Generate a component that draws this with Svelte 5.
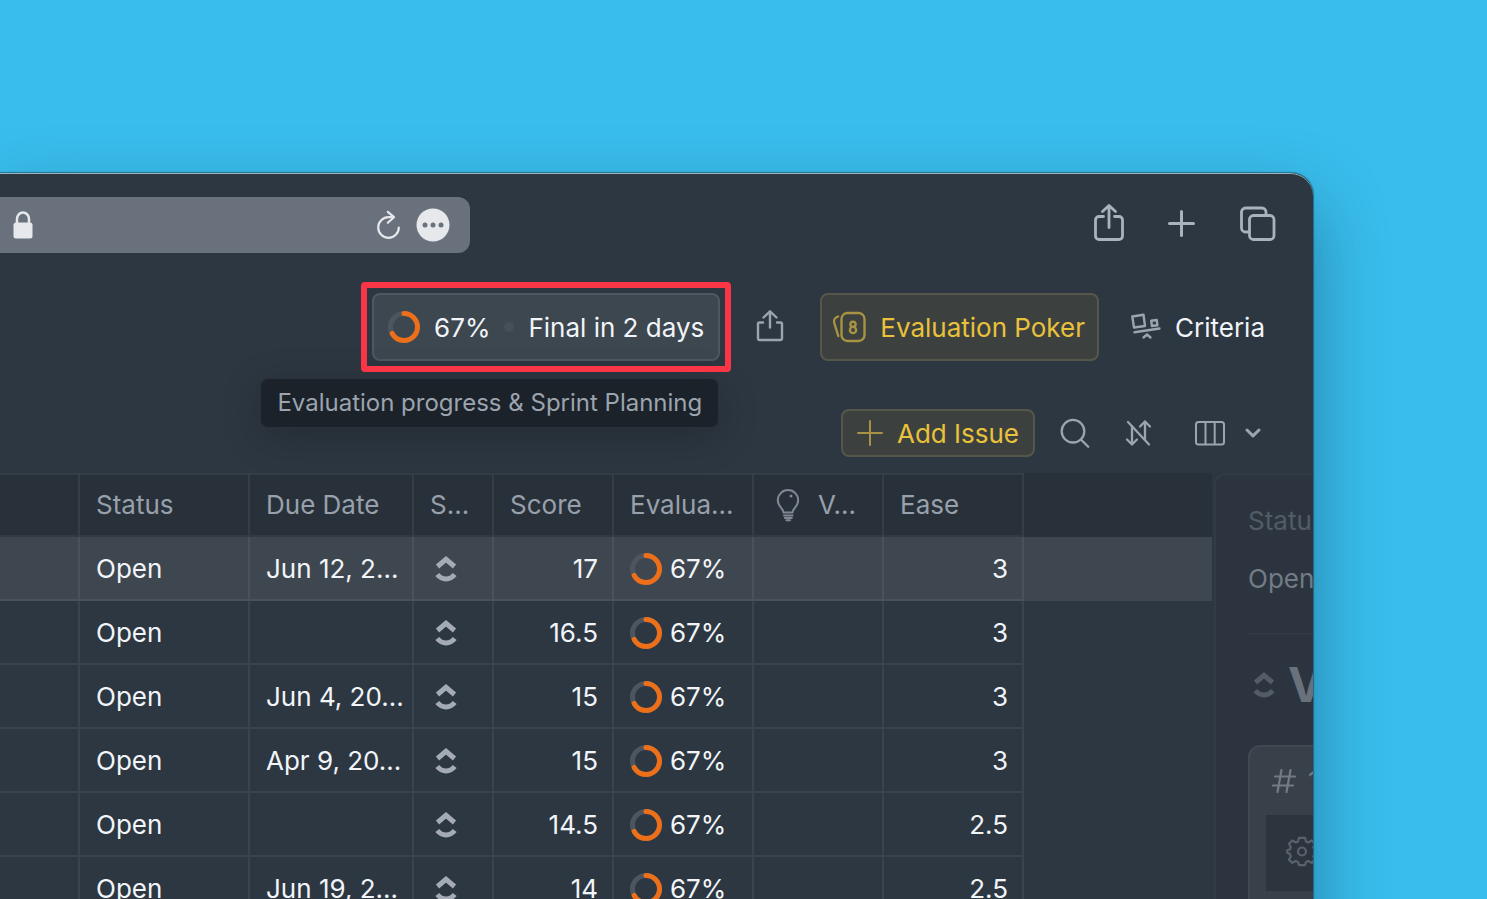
<script lang="ts">
	type Issue = {
		status: string;
		due: string;
		score: string;
		progress: number;
		ease: string;
	};

	const issues: Issue[] = [
		{ status: 'Open', due: 'Jun 12, 2...', score: '17', progress: 67, ease: '3' },
		{ status: 'Open', due: '', score: '16.5', progress: 67, ease: '3' },
		{ status: 'Open', due: 'Jun 4, 20...', score: '15', progress: 67, ease: '3' },
		{ status: 'Open', due: 'Apr 9, 20...', score: '15', progress: 67, ease: '3' },
		{ status: 'Open', due: '', score: '14.5', progress: 67, ease: '2.5' },
		{ status: 'Open', due: 'Jun 19, 2...', score: '14', progress: 67, ease: '2.5' }
	];

	let selected = $state(0);
	let address = $state('');
</script>

{#snippet ring(percent: number)}
	<svg class="ring" width="32" height="32" viewBox="0 0 32 32" fill="none" stroke-width="5">
		<circle cx="16" cy="16" r="13.5" stroke="#4d565f" />
		<circle
			cx="16"
			cy="16"
			r="13.5"
			stroke="#ed6f1a"
			stroke-linecap="round"
			pathLength="100"
			stroke-dasharray="{percent} 100"
			transform="rotate(-90 16 16)"
		/>
	</svg>
{/snippet}

{#snippet clickup()}
	<svg class="clickup" width="32" height="32" viewBox="0 0 32 32" fill="none" stroke="currentColor" stroke-width="5">
		<path d="M7.5 13.5 16 6.3l8.5 7.2" />
		<path d="M7.3 21.500c4.800 6 12.600 6 17.400 0" />
	</svg>
{/snippet}

<div class="desktop">
	<div class="window">
		<div class="browser-bar">
			<div class="url-bar">
				<svg width="22" height="30" viewBox="0 0 22 30" fill="none">
					<path d="M5 14V9a6 6.500 0 0 1 12 0v5" stroke="#e6e8eb" stroke-width="2.5" />
					<rect x="1.5" y="12.5" width="19" height="16" rx="2.5" fill="#e6e8eb" />
				</svg>
				<input type="text" aria-label="Address" bind:value={address} />
				<button class="plain" aria-label="Reload">
					<svg width="28" height="32" viewBox="0 0 28 32" fill="none" stroke="#e6e8eb" stroke-width="2.2" stroke-linecap="round" stroke-linejoin="round">
						<path d="M18.500 8.200H14.500A10.300 10.300 0 1 0 24.800 18.500" />
						<path d="M13.800 2.800l6.200 5.400-6.200 5.600" />
					</svg>
				</button>
				<button class="plain" aria-label="More">
					<svg width="34" height="34" viewBox="0 0 34 34">
						<circle cx="17" cy="17" r="16.5" fill="#e6e8eb" />
						<g fill="#69727c">
							<circle cx="9" cy="17" r="2.500" />
							<circle cx="17" cy="17" r="2.500" />
							<circle cx="25" cy="17" r="2.500" />
						</g>
					</svg>
				</button>
			</div>
			<div class="browser-actions">
				<button class="plain" aria-label="Share page">
					<svg width="40" height="44" viewBox="0 0 40 44" fill="none" stroke="currentColor" stroke-width="2.800" stroke-linecap="round" stroke-linejoin="round">
						<path d="M14.500 13.500H10a3.500 3.500 0 0 0-3.500 3.500v16a3.500 3.500 0 0 0 3.500 3.500h20a3.500 3.500 0 0 0 3.500-3.500V17a3.500 3.500 0 0 0-3.500-3.500h-4.500" />
						<path d="M20 24.500V3M13.500 8.500 20 2.500l6.500 6" />
					</svg>
				</button>
				<button class="plain" aria-label="New tab">
					<svg width="40" height="44" viewBox="0 0 40 44" fill="none" stroke="currentColor" stroke-width="3" stroke-linecap="round">
						<path d="M18.500 8.500v24M6.500 20.500h24" />
					</svg>
				</button>
				<button class="plain" aria-label="Tab overview">
					<svg width="40" height="44" viewBox="0 0 40 44" fill="none" stroke="currentColor" stroke-width="2.800" stroke-linejoin="round">
						<path d="M12 29H8.500A4 4 0 0 1 4.500 25V9a4 4 0 0 1 4-4H25a4 4 0 0 1 4 4v3" />
						<rect x="12.5" y="12.500" width="24.500" height="24" rx="4" />
					</svg>
				</button>
			</div>
		</div>

		<div class="header">
			<div class="progress-wrap">
				<button class="btn progress-btn" aria-describedby="progress-tip">
					{@render ring(67)}
					<span>67%</span>
					<i class="dot"></i>
					<span>Final in 2 days</span>
				</button>
				<div class="tooltip" id="progress-tip" role="tooltip">Evaluation progress &amp; Sprint Planning</div>
			</div>
			<button class="btn share-btn" aria-label="Share">
				<svg width="32" height="36" viewBox="0 0 32 36" fill="none" stroke="currentColor" stroke-width="2.400" stroke-linecap="round" stroke-linejoin="round">
					<path d="M9 13.500H5.500A1.500 1.500 0 0 0 4 15v14.500A1.500 1.500 0 0 0 5.500 31h21a1.500 1.500 0 0 0 1.500-1.500V15a1.500 1.500 0 0 0-1.500-1.500H23" />
					<path d="M16 18.500V2.500M9.500 8.500 16 2.300l6.500 6.200" />
				</svg>
			</button>
			<button class="btn accent poker-btn">
				<svg width="34" height="34" viewBox="0 0 34 34" fill="none" stroke="currentColor" stroke-width="2.400" stroke-linecap="round">
					<rect x="9.500" y="3" width="23" height="28" rx="6" />
					<path d="M6 6.500C2.500 8 1.500 9.500 2.300 13l4 13" />
					<circle cx="21" cy="14.300" r="2.600" />
					<circle cx="21" cy="20" r="3.100" />
				</svg>
				<span>Evaluation Poker</span>
			</button>
			<button class="btn criteria-btn">
				<svg width="30" height="30" viewBox="0 0 30 30" fill="none" stroke="currentColor" stroke-width="2.400" stroke-linecap="round" stroke-linejoin="round">
					<path d="M1.300 4.500l11.200-1.700 1.500 11.200-11 1.500z" />
					<path d="M20.200 8.700l5.500-.7.700 5.300-5.500.7z" />
					<path d="M3.500 20.300l25-3.800M12.500 25.500l3.500-3 3.500 3" />
				</svg>
				<span>Criteria</span>
			</button>
		</div>

		<div class="toolbar">
			<button class="btn accent">
				<svg width="26" height="26" viewBox="0 0 26 26" stroke="currentColor" stroke-width="2" stroke-linecap="round">
					<path d="M13 1v24M1 13h24" />
				</svg>
				<span>Add Issue</span>
			</button>
			<button class="btn icon-btn" aria-label="Search">
				<svg width="32" height="32" viewBox="0 0 32 32" fill="none" stroke="currentColor" stroke-width="2.300" stroke-linecap="round">
					<circle cx="14" cy="14.200" r="11.300" />
					<path d="M22.200 22.700l7 7" />
				</svg>
			</button>
			<button class="btn icon-btn" aria-label="Sorting off">
				<svg width="32" height="32" viewBox="0 0 32 32" fill="none" stroke="currentColor" stroke-width="2.300" stroke-linecap="round" stroke-linejoin="round">
					<path d="M5 5 26 27.500" />
					<path d="M9 9.500V27M4 22.500l5 5 5-5" />
					<path d="M22 22V4.500M17 9.500l5-5 5 5" />
				</svg>
			</button>
			<button class="btn columns-btn" aria-label="Columns">
				<svg width="30" height="26" viewBox="0 0 30 26" fill="none" stroke="currentColor" stroke-width="2">
					<rect x="1" y="2" width="28" height="22.500" rx="2.500" />
					<path d="M10.500 2v22.500M19.700 2v22.500" />
				</svg>
				<svg width="16" height="12" viewBox="0 0 16 12" fill="none" stroke="currentColor" stroke-width="3" stroke-linecap="round" stroke-linejoin="round">
					<path d="M2 3l6 5.800L14 3" />
				</svg>
			</button>
		</div>

		<div class="content">
			<table>
				<colgroup>
					<col class="w80" />
					<col class="w170" />
					<col class="w164" />
					<col class="w80" />
					<col class="w120" />
					<col class="w140" />
					<col class="w130" />
					<col class="w140" />
					<col />
				</colgroup>
				<thead>
					<tr>
						<th></th>
						<th>Status</th>
						<th>Due Date</th>
						<th>S...</th>
						<th>Score</th>
						<th>Evalua...</th>
						<th>
							<div class="cell value-head">
								<svg width="36" height="36" viewBox="0 0 36 36" fill="none" stroke="currentColor" stroke-width="2" stroke-linecap="round">
									<path d="M13.500 25.500c0-4-5.700-6-5.700-12.200a10.200 10.200 0 0 1 20.400 0c0 6.200-5.700 8.200-5.700 12.200z" />
									<path d="M14 28.500h8.500M14.800 31h7M16.500 33.300h3.500" />
									<circle cx="21" cy="9" r="1.500" fill="currentColor" stroke="none" />
								</svg>
								<span>V...</span>
							</div>
						</th>
						<th>Ease</th>
						<th class="filler"></th>
					</tr>
				</thead>
				<tbody>
					{#each issues as issue, i}
						<tr class:selected={i === selected} onclick={() => (selected = i)}>
							<td></td>
							<td>{issue.status}</td>
							<td>{issue.due}</td>
							<td><div class="cell">{@render clickup()}</div></td>
							<td class="num">{issue.score}</td>
							<td>
								<div class="cell">
									{@render ring(issue.progress)}
									<span>{issue.progress}%</span>
								</div>
							</td>
							<td></td>
							<td class="num">{issue.ease}</td>
							<td class="filler"></td>
						</tr>
					{/each}
				</tbody>
			</table>

			<aside class="panel">
				<div class="label">Status</div>
				<div class="value">Open</div>
				<div class="title">
					{@render clickup()}
					<h2>V</h2>
				</div>
				<div class="card">
					<div class="card-head">
						<svg width="24" height="26" viewBox="0 0 24 26" fill="none" stroke="currentColor" stroke-width="2.200" stroke-linecap="round">
							<path d="M9.500 2 5.500 24M18.500 2l-4 22M3 8.500h20M1 17.500h20" />
						</svg>
						<span>1</span>
					</div>
					<div class="card-body">
						<svg width="32" height="32" viewBox="0 0 32 32" fill="none" stroke="currentColor" stroke-width="2.200" stroke-linejoin="round">
							<path d="M13 2.800h6l1 3.700 2.300 1 3.400-2 3.200 3.300-1.600 3.400 1 2.300 3 .7v2.600l-3 1-1 2.500 1.700 3.400-3.300 3.200-3.400-1.900-2.300 1-1 3.200h-6l-1-3.200-2.300-1-3.400 1.900L3 24.700l1.800-3.400-1-2.500-2.600-1v-2.600l2.600-.7 1-2.300L3 8.800l3.300-3.300 3.400 2 2.300-1z" />
							<circle cx="16" cy="16.500" r="4" />
						</svg>
					</div>
				</div>
			</aside>
		</div>
	</div>
</div>

<style>
	:global(body) {
		background: #39bdec;
		font-family: Inter, 'Liberation Sans', sans-serif;
	}

	.desktop {
		display: flex;
		height: 100vh;
		padding: 173px 174px 0 0;
		box-sizing: border-box;
		overflow: hidden;
	}

	.window {
		flex: 1;
		min-width: 0;
		display: flex;
		flex-direction: column;
		margin-bottom: -80px;
		background: #2d3741;
		border-radius: 0 22px 0 0;
		box-shadow:
			0 0 1px 1px rgba(0, 20, 30, 0.4),
			0 32px 72px rgba(0, 20, 40, 0.36);
		color: #f1f4f8;
		font-size: 26px;
		line-height: 32px;
		overflow: hidden;
	}

	button {
		display: flex;
		align-items: center;
		margin: 0;
		padding: 0;
		background: none;
		border: none;
		color: inherit;
		font: inherit;
		white-space: nowrap;
		cursor: pointer;
	}

	svg {
		display: block;
		flex: none;
	}

	.browser-bar {
		display: flex;
		justify-content: space-between;
		align-items: flex-start;
		padding: 24px 36px 40px 0;
		border-radius: 0 22px 0 0;
		box-shadow: inset 0 1px 0 #9db4bd;
	}

	.url-bar {
		display: flex;
		align-items: center;
		flex: 0 1 470px;
		height: 56px;
		min-width: 0;
		padding: 0 20px 0 12px;
		box-sizing: border-box;
		background: #69727c;
		border-radius: 0 12px 12px 0;
		gap: 14px;
	}

	.url-bar input {
		flex: 1;
		width: 0;
		min-width: 0;
		background: none;
		border: none;
		outline: none;
		color: #e6e8eb;
		font: inherit;
	}

	.browser-actions {
		display: flex;
		gap: 34px;
		padding-top: 6px;
		color: #aab2bd;
	}

	.header,
	.toolbar {
		display: flex;
		justify-content: flex-end;
		gap: 16px;
	}

	.header {
		padding: 0 32px 48px;
	}

	.toolbar {
		padding: 0 36px 16px;
	}

	.btn {
		height: 48px;
		padding: 0 14px;
		box-sizing: border-box;
		border: 2px solid transparent;
		border-radius: 8px;
		gap: 14px;
	}

	.btn svg {
		color: #9ba4af;
	}

	.btn span {
		padding-top: 2px;
	}

	.header .btn {
		height: 68px;
	}

	.progress-wrap {
		position: relative;
	}

	/* callout frame around the progress button */
	.progress-wrap::after {
		content: '';
		position: absolute;
		inset: -11px;
		border: 6px solid #fa3545;
		border-radius: 4px;
		pointer-events: none;
	}

	.progress-btn {
		background: #3d474f;
		border-color: #4e5861;
	}

	.dot {
		width: 10px;
		height: 10px;
		border-radius: 50%;
		background: #465059;
	}

	.tooltip {
		position: absolute;
		top: 85px;
		right: 1px;
		padding: 8px 16px;
		background: #1c2229;
		border: 1px solid #29313a;
		border-radius: 8px;
		box-shadow: 0 8px 40px rgba(0, 0, 0, 0.2);
		color: #9ba4af;
		font-size: 24px;
		white-space: nowrap;
	}

	.header .share-btn {
		width: 68px;
		justify-content: center;
	}

	.accent {
		background: #3c413f;
		border-color: #57564b;
		color: #e9c13a;
	}

	.accent svg {
		color: #a89243;
	}

	.header .poker-btn {
		padding: 0 12px 0 10px;
	}

	.icon-btn {
		width: 48px;
		padding: 0;
		justify-content: center;
	}

	.columns-btn {
		gap: 20px;
	}

	.content {
		display: flex;
		flex: 1;
		align-items: stretch;
	}

	table {
		flex: 1;
		min-width: 0;
		align-self: flex-start;
		table-layout: fixed;
		border-collapse: separate;
		border-spacing: 0;
	}

	.w80 {
		width: 80px;
	}

	.w120 {
		width: 120px;
	}

	.w130 {
		width: 130px;
	}

	.w140 {
		width: 140px;
	}

	.w164 {
		width: 164px;
	}

	.w170 {
		width: 170px;
	}

	th,
	td {
		height: 64px;
		padding: 2px 0 0 16px;
		box-sizing: border-box;
		border-right: 2px solid #3b444e;
		border-bottom: 2px solid #3b444e;
		font-weight: 400;
		text-align: left;
		white-space: nowrap;
		overflow: hidden;
	}

	th {
		padding-top: 0;
		background: #28313a;
		border-top: 2px solid #343d46;
		border-bottom: 2px solid #323b44;
		border-right-color: #353e47;
		color: #98a0ab;
	}

	th.filler,
	td.filler {
		border-color: transparent;
	}

	.selected td {
		background: #3e474f;
		border-color: #49525b;
	}

	.selected td.filler {
		border-color: #3e474f;
	}

	td.num {
		padding-right: 14px;
		text-align: right;
	}

	.cell {
		display: flex;
		align-items: center;
		gap: 8px;
	}

	.value-head {
		gap: 12px;
	}

	.value-head svg {
		color: #7f8893;
	}

	.clickup {
		color: #a5abb4;
	}

	.panel {
		flex: 0 0 99px;
		margin-left: 2px;
		padding: 30px 0 0 32px;
		box-sizing: border-box;
		background: #2c353f;
		border: 2px solid #323b45;
		border-right: none;
		border-bottom: none;
		border-radius: 12px 0 0 0;
		white-space: nowrap;
		overflow: hidden;
	}

	.label {
		margin-bottom: 26px;
		color: #535c66;
	}

	.value {
		padding-bottom: 38px;
		border-bottom: 2px solid #323b44;
		color: #737b85;
	}

	.title {
		display: flex;
		align-items: center;
		gap: 8px;
		padding: 20px 0 30px;
		color: #69727c;
	}

	.title .clickup {
		color: #535c66;
	}

	h2 {
		margin: 0;
		font-size: 48px;
		line-height: 60px;
		font-weight: 700;
	}

	.card {
		width: 320px;
		padding: 0 16px;
		background: #38414a;
		border: 2px solid #404952;
		border-radius: 12px;
		color: #737b85;
	}

	.card-head {
		display: flex;
		align-items: center;
		gap: 12px;
		height: 68px;
		padding-left: 6px;
	}

	.card-body {
		height: 76px;
		padding: 20px;
		box-sizing: border-box;
		background: #2c353e;
		color: #59626c;
		margin-bottom: 80px;
	}
</style>
